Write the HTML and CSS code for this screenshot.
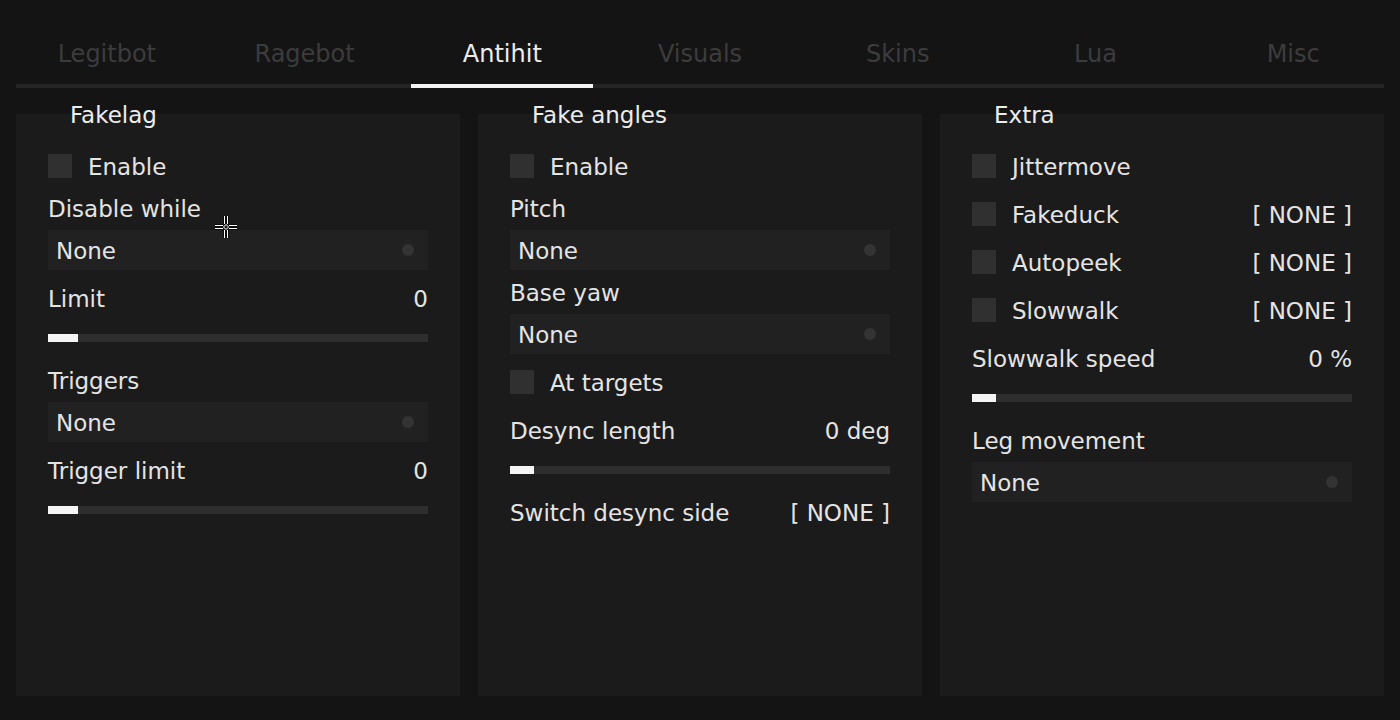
FILE: index.html
```html
<!DOCTYPE html>
<html>
<head>
<meta charset="utf-8">
<link rel="stylesheet" href="styles.css">
</head>
<body>
<div class="app">
  <nav class="tabs">
    <div class="tab">Legitbot</div>
    <div class="tab">Ragebot</div>
    <div class="tab active">Antihit</div>
    <div class="tab">Visuals</div>
    <div class="tab">Skins</div>
    <div class="tab">Lua</div>
    <div class="tab">Misc</div>
  </nav>

  <main class="panels">
    <section class="panel">
      <div class="title">Fakelag</div>
      <div class="check first"><span class="box"></span><span class="text">Enable</span></div>
      <div class="label after-check">Disable while</div>
      <div class="combo"><span class="text">None</span><span class="dot"></span></div>
      <div class="row after-combo"><span>Limit</span><span>0</span></div>
      <div class="slider"><div class="fill" style="width:30px"></div></div>
      <div class="label after-slider">Triggers</div>
      <div class="combo"><span class="text">None</span><span class="dot"></span></div>
      <div class="row after-combo"><span>Trigger limit</span><span>0</span></div>
      <div class="slider"><div class="fill" style="width:30px"></div></div>
    </section>

    <section class="panel">
      <div class="title">Fake angles</div>
      <div class="check first"><span class="box"></span><span class="text">Enable</span></div>
      <div class="label after-check">Pitch</div>
      <div class="combo"><span class="text">None</span><span class="dot"></span></div>
      <div class="label after-combo-tight">Base yaw</div>
      <div class="combo"><span class="text">None</span><span class="dot"></span></div>
      <div class="check after-combo-check"><span class="box"></span><span class="text">At targets</span></div>
      <div class="row after-check-wide"><span>Desync length</span><span>0 deg</span></div>
      <div class="slider"><div class="fill" style="width:24px"></div></div>
      <div class="row after-slider-row"><span>Switch desync side</span><span>[ NONE ]</span></div>
    </section>

    <section class="panel">
      <div class="title">Extra</div>
      <div class="check first"><span class="box"></span><span class="text">Jittermove</span></div>
      <div class="check stacked"><span class="box"></span><span class="text grow">Fakeduck</span><span class="text">[ NONE ]</span></div>
      <div class="check stacked"><span class="box"></span><span class="text grow">Autopeek</span><span class="text">[ NONE ]</span></div>
      <div class="check stacked"><span class="box"></span><span class="text grow">Slowwalk</span><span class="text">[ NONE ]</span></div>
      <div class="row after-check-wide"><span>Slowwalk speed</span><span>0 %</span></div>
      <div class="slider"><div class="fill" style="width:24px"></div></div>
      <div class="label after-slider">Leg movement</div>
      <div class="combo"><span class="text">None</span><span class="dot"></span></div>
    </section>
  </main>
</div>

<svg class="cursor" width="24" height="24" viewBox="0 0 24 24">
  <g stroke="#000" stroke-width="3" fill="none" opacity="0.6">
    <path d="M10.5 1v8M13.5 1v8M10.5 15v8M13.5 15v8M1 10.5h8M1 13.5h8M15 10.5h8M15 13.5h8"/>
  </g>
  <g stroke="#fff" stroke-width="1" fill="none">
    <path d="M10.5 1v8M13.5 1v8M10.5 15v8M13.5 15v8M1 10.5h8M1 13.5h8M15 10.5h8M15 13.5h8"/>
    <path d="M12 9.5l2.5 2.5-2.5 2.5-2.5-2.5z"/>
  </g>
</svg>
</body>
</html>
```

FILE: styles.css
```css
* { box-sizing: border-box; margin: 0; padding: 0; }

html, body {
  width: 1400px;
  height: 720px;
  background: #141414;
  overflow: hidden;
}

body {
  font-family: "DejaVu Sans", Verdana, sans-serif;
  font-size: 23px;
  line-height: 24px;
  color: #e4e4e4;
  position: relative;
}

.app {
  display: flex;
  flex-direction: column;
  height: 720px;
}

/* ---------- tabs ---------- */
.tabs {
  display: flex;
  padding: 0 8px;
  height: 88px;
  background: linear-gradient(#242424, #242424) no-repeat 16px 84px / 1368px 4px;
}

.tab {
  flex: 1;
  text-align: center;
  font-size: 24px;
  line-height: 28px;
  padding-top: 40px;
  color: #3c3c3c;
  position: relative;
}

.tab.active {
  color: #ececec;
}

.tab.active::after {
  content: "";
  position: absolute;
  left: 8px;
  right: 8px;
  bottom: 0;
  height: 4px;
  background: #f4f4f4;
}

/* ---------- panels ---------- */
.panels {
  display: grid;
  grid-template-columns: repeat(3, 1fr);
  gap: 18px;
  padding: 0 16px;
  margin-top: 26px;
  height: 582px;
}

.panel {
  background: #1b1b1b;
  padding: 0 32px;
  display: flex;
  flex-direction: column;
}

.title {
  margin-top: -10px;
  margin-left: 22px;
  height: 24px;
  line-height: 22px;
  color: #ececec;
}

.check {
  display: flex;
  align-items: center;
  height: 24px;
}

.check .box {
  width: 24px;
  height: 24px;
  background: #303030;
  margin-right: 16px;
  flex: none;
}

.text {
  padding-top: 2px;
}

.check .grow { flex: 1; }

.first { margin-top: 26px; }
.stacked { margin-top: 24px; }

.label {
  height: 24px;
  line-height: 22px;
}

.row {
  display: flex;
  justify-content: space-between;
  height: 24px;
  line-height: 22px;
}

.combo {
  margin-top: 8px;
  height: 40px;
  background: #212121;
  display: flex;
  align-items: center;
  justify-content: space-between;
  padding: 0 14px 0 8px;
}

.combo .dot {
  width: 12px;
  height: 12px;
  border-radius: 50%;
  background: #333333;
}

.slider {
  margin-top: 22px;
  height: 8px;
  background: #2e2e2e;
}

.slider .fill {
  height: 8px;
  background: #f4f4f4;
}

.after-check { margin-top: 20px; }
.after-combo { margin-top: 18px; }
.after-combo-tight { margin-top: 12px; }
.after-combo-check { margin-top: 16px; }
.after-check-wide { margin-top: 26px; }
.after-slider { margin-top: 28px; }
.after-slider-row { margin-top: 28px; }

/* ---------- cursor overlay ---------- */
.cursor {
  position: absolute;
  left: 214px;
  top: 215px;
}
```
